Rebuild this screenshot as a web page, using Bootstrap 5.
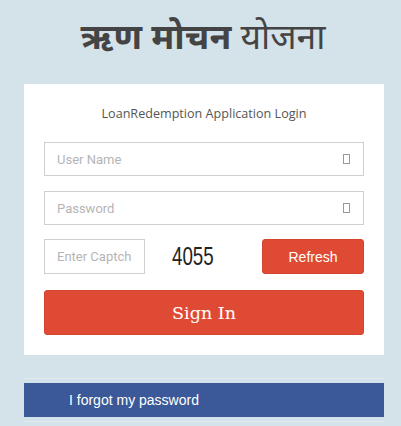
<!DOCTYPE html>
<html lang="hi">
<head>
<meta charset="utf-8">
<title>LoanRedemption Application Login</title>
<link rel="stylesheet" href="https://cdn.jsdelivr.net/npm/bootstrap@5.3.0/dist/css/bootstrap.min.css">
<style>
html,body{height:100%;overflow:hidden}
body{background:#d4e2e9;font-family:"Open Sans","Liberation Sans",sans-serif;color:#444;padding:0 17px 0 24px}
.page-title{height:84px;margin:0;padding-top:13px;padding-right:2px;font-size:35.5px;line-height:44px;color:#444;text-align:center;font-weight:400;font-family:"Noto Sans","Noto Sans Devanagari","Lohit Devanagari","FreeSans",sans-serif}
.page-title strong{font-weight:700}
.login-box{background:#fff;height:271px;padding:21px 20px 0}
.login-head{font-size:12.6px;line-height:18px;text-align:center;color:#555;margin-bottom:19px}
.field-wrap{position:relative;margin-bottom:15px}
.field-wrap .form-control{height:34px;border-radius:0;border:1px solid #d0d0d0;padding:0 12px;font:13px "Roboto","Open Sans",sans-serif;box-shadow:none}
.form-control::placeholder{color:#b5b5b5;opacity:1}
.tofu{position:absolute;right:14px;top:12px;width:7px;height:10px;border:1px solid #999;pointer-events:none}
.captcha-row{display:flex;align-items:center;margin-top:-1px;margin-bottom:16px}
.captcha-row .form-control{width:101px;flex:none;height:35px;border-radius:0;border:1px solid #d0d0d0;padding:0 12px;font:13px "Roboto","Open Sans",sans-serif}
.captcha-code{flex:1;padding-left:27px;font:25px/35px "Liberation Sans",sans-serif;color:#222}
.captcha-code span{display:inline-block;transform:scaleX(.75);transform-origin:left center}
.btn-refresh{width:102px;height:35px;flex:none;padding:0;background:#df4a35;border:1px solid #d54431;border-radius:3px;color:#fff;font:14px "Liberation Sans",sans-serif}
.btn-signin{width:100%;height:45px;padding:0;background:#df4a35;border:1px solid #d54431;border-radius:3px;color:#fff;font:17.5px "DejaVu Serif","Liberation Serif",serif}
.btn-refresh:hover,.btn-signin:hover{background:#df4a35;color:#fff}
.forgot-band{margin-top:23px;border-top:1px solid #e0ebf0;border-bottom:1px solid #e0ebf0;padding:4px 0}
.forgot-link{display:block;height:34px;background:#3b5998;color:#fff;font:14px/34px "Liberation Sans",sans-serif;padding-left:45px;text-decoration:none}
</style>
</head>
<body>
<h1 class="page-title"><strong>ऋण मोचन</strong> योजना</h1>
<form class="login-box">
  <div class="login-head">LoanRedemption Application Login</div>
  <div class="field-wrap"><input class="form-control" type="text" placeholder="User Name"><span class="tofu"></span></div>
  <div class="field-wrap"><input class="form-control" type="password" placeholder="Password"><span class="tofu"></span></div>
  <div class="captcha-row">
    <input class="form-control" type="text" placeholder="Enter Captcha">
    <div class="captcha-code"><span>4055</span></div>
    <button type="button" class="btn btn-refresh">Refresh</button>
  </div>
  <button type="button" class="btn btn-signin">Sign In</button>
</form>
<div class="forgot-band"><a class="forgot-link" href="#">I forgot my password</a></div>
<script src="https://cdn.jsdelivr.net/npm/bootstrap@5.3.0/dist/js/bootstrap.bundle.min.js"></script>
</body>
</html>
